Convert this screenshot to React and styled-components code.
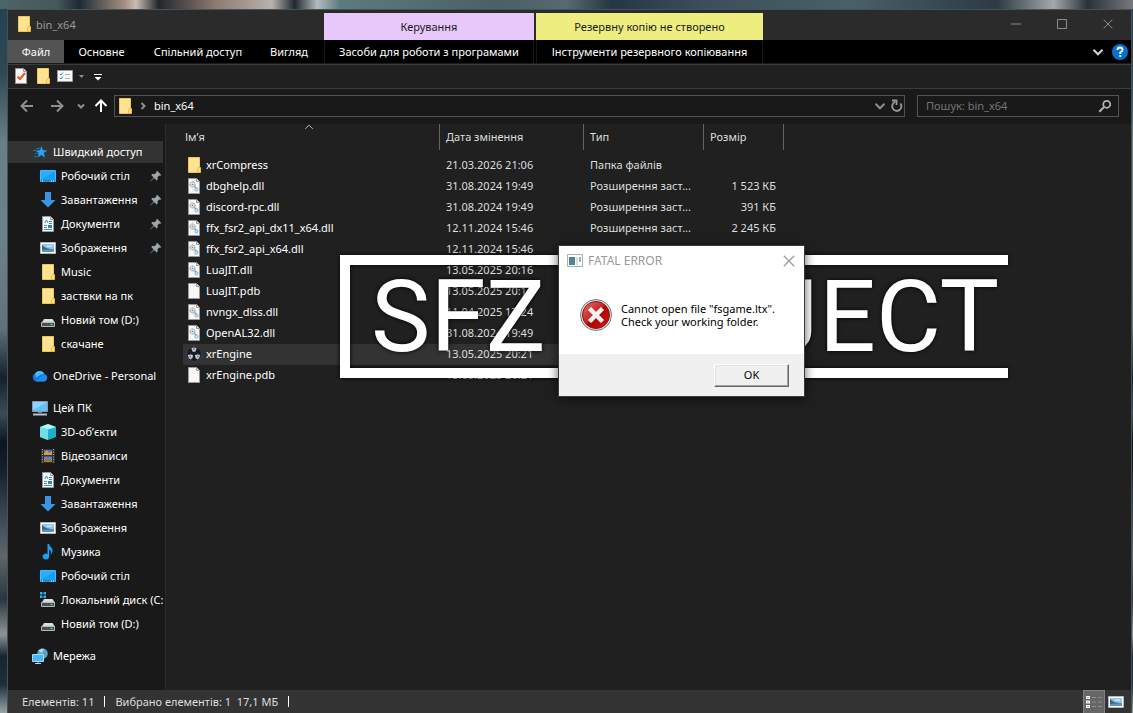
import { useState } from "react"
import styled, { createGlobalStyle } from "styled-components"

const Global = createGlobalStyle`
 * { box-sizing: border-box; }
 body {
  margin: 0;
  background-color: #1c2a33;
  font-family: 'Noto Sans', 'Open Sans', sans-serif;
  font-size: 11px;
  color: #fff;
 }
 button, input { font: inherit; color: inherit; }
`

/* ---------- layout ---------- */

const Desktop = styled.div`
 position: relative;
 min-height: 100vh;
 padding: 9px 1px 0 7px;
 display: flex;
 flex-direction: column;
 overflow: hidden;
 background:
  linear-gradient(90deg, #4d6468 0, #47585c 5%, #1d2a33 7%, #a58f83 11%, #c9bcb4 12%, #22272c 14%, #8d7a70 19%, #b9b2ac 24%, #1f2931 26%, #b4bbbb 28%, #5c7b7e 30%, #4a6066 44%, #566b70 50%, #263642 54%, #3a4f59 62%, #4a6068 75%, #2c3a44 88%, #a5a8aa 93%, #2a3138 96%, #77797d 100%) 0 0 / 100% 9px no-repeat,
  linear-gradient(180deg, #24414f 0, #2f4854 10%, #6a7f84 20%, #6d8287 33%, #5f7378 46%, #14202a 53%, #3b4c56 58%, #0d151c 62%, #16202a 66%, #394650 72%, #60666b 78%, #2a353d 84%, #8e9396 89%, #16262f 92%, #1d2f3a 96%, #98a3a6 100%);
`

const Window = styled.main`
 flex: 1;
 display: flex;
 flex-direction: column;
 border: 1px solid #44525a;
 border-bottom: none;
 background-color: #191919;
`

const TitleBar = styled.header`
 display: flex;
 align-items: flex-end;
 height: 30px;
 background-color: #2b2b2b;
`

const Caption = styled.div`
 flex: 0 0 316px;
 height: 30px;
 padding: 0 0 2px 8px;
 display: flex;
 align-items: center;
 gap: 4px;
 color: #9a9a9a;
`

const Context = styled.div`
 flex: 0 0 ${p => p.$width}px;
 height: 27px;
 margin-right: 2px;
 display: flex;
 align-items: center;
 justify-content: center;
 background-color: ${p => p.$color};
 color: #1c1c1c;
`

const WindowButtons = styled.div`
 margin-left: auto;
 display: flex;
`

const PlainButton = styled.button`
 border: none;
 padding: 0;
 background: none;
 display: flex;
 align-items: center;
 justify-content: center;
`

const WindowButton = styled(PlainButton)`
 width: 46px;
 height: 28px;
 margin-bottom: 2px;
 color: #8c8c8c;

 &:hover {
  background-color: #404040;
 }
`

const Ribbon = styled.nav`
 display: flex;
 height: 24px;
 background-color: #000;
 border-bottom: 1px solid #1b1b1b;
`

const MainTabs = styled.div`
 flex: 0 0 316px;
 display: grid;
 grid-template-columns: 56px 75px 118px 64px;
`

const Tab = styled(PlainButton)`
 height: 23px;
 white-space: nowrap;
 background-color: ${p => p.$active ? '#535353' : 'transparent'};
`

const ContextTab = styled(Tab)`
 flex: 0 0 ${p => p.$width}px;
 margin-right: 2px;
 border-left: 1px solid #161616;
 border-right: 1px solid #161616;
`

const RibbonEnd = styled.div`
 margin-left: auto;
 padding-right: 3px;
 display: flex;
 align-items: center;
 gap: 8px;
`

const QuickBar = styled.div`
 height: 25px;
 padding: 0 0 1px 5px;
 display: flex;
 align-items: center;
 gap: 6px;
 background-color: #202020;
 border-top: 1px solid #3c3c3c;
 border-bottom: 1px solid #3c3c3c;
`

const NavBar = styled.div`
 height: 35px;
 padding: 0 12px 1px 10px;
 display: flex;
 align-items: center;
`

const Arrows = styled.div`
 flex: 0 0 96px;
 display: grid;
 grid-template-columns: 18px 42px 5px 26px;
 align-items: center;
 justify-items: center;

 & > :last-child { justify-self: end; }
`

const Address = styled.div`
 flex: 1;
 height: 22px;
 padding: 0 0 0 2px;
 display: flex;
 align-items: center;
 gap: 6px;
 border: 1px solid #535353;
`

const Crumb = styled(PlainButton)`
 padding: 0 0 1px 1px;
`

const AddressEnd = styled.div`
 margin-left: auto;
 display: flex;
 align-items: center;
 gap: 2px;
`

const Search = styled.label`
 flex: 0 0 202px;
 min-width: 0;
 height: 22px;
 margin-left: 12px;
 padding: 0 6px 0 8px;
 display: flex;
 align-items: center;
 border: 1px solid #535353;

 input {
  flex: 1;
  min-width: 0;
  padding: 0 0 1px;
  border: none;
  outline: none;
  background: none;
 }
 input::placeholder {
  color: #757575;
  opacity: 1;
 }
`

const Body = styled.div`
 flex: 1;
 display: flex;
`

const Sidebar = styled.aside`
 flex: 0 0 158px;
 padding-top: 16px;
 border-right: 1px solid #2b2b2b;
 overflow: hidden;
`

const Group = styled.div`
 margin-bottom: 8px;
`

const Place = styled.a`
 height: 24px;
 padding-left: ${p => p.$child ? 32 : 24}px;
 padding-right: 1px;
 display: flex;
 align-items: center;
 gap: 5px;
 color: #fff;
 text-decoration: none;
 white-space: nowrap;
 overflow: hidden;
 background: ${p => p.$active ? '#333' : 'none'};
 background-clip: padding-box;
 border: solid transparent;
 border-width: 1px 2px 1px 0;

 svg { flex: none; }
`

const PlaceName = styled.span`
 padding-bottom: 1px;
`

const Pinned = styled.span`
 margin-left: auto;
 display: flex;
`

const Files = styled.section`
 flex: 1;
 padding-left: 17px;
 background-color: #202020;
`

const Table = styled.table`
 width: 600px;
 table-layout: fixed;
 border-collapse: separate;
 border-spacing: 0;
`

const Th = styled.th`
 width: ${p => p.$width}px;
 height: 26px;
 padding: 0 0 1px ${p => p.$first ? 2 : 6}px;
 border-right: 1px solid #636363;
 text-align: left;
 font-weight: 400;
 color: #dedede;
`

const HeadCell = styled.span`
 display: flex;
 align-items: center;
 position: relative;
`

const SortMark = styled.span`
 position: absolute;
 left: 119px;
 top: -7px;
 display: flex;
`

const Spacer = styled.tbody`
 td { height: 5px; padding: 0; }
`

const Tr = styled.tr`
 height: 21px;
 background-color: ${p => p.$active ? '#333' : 'transparent'};
`

const Td = styled.td`
 height: 21px;
 padding: 0 8px 1px 6px;
 overflow: hidden;
 white-space: nowrap;
 text-align: ${p => p.$right ? 'right' : 'left'};
 line-height: 20px;
 color: #dedede;
`

const FileName = styled.span`
 display: flex;
 align-items: center;
 gap: 4px;
 margin-left: -3px;
 color: #fff;
`

const StatusBar = styled.footer`
 height: 23px;
 padding-left: 14px;
 display: flex;
 align-items: center;
 gap: 10px;
 background-color: #333;
 color: #dedede;
`

const Divider = styled.span`
 width: 1px;
 height: 11px;
 background-color: #fff;
`

const Views = styled.div`
 margin-left: auto;
 padding-right: 4px;
 display: flex;
`

const ViewButton = styled(PlainButton)`
 width: 22px;
 height: 23px;
 border: ${p => p.$active ? '1px solid #838383' : 'none'};
 border-bottom: none;
 background-color: ${p => p.$active ? '#666' : 'transparent'};
`

/* ---------- floating windows ---------- */

const Splash = styled.div`
 position: absolute;
 left: 340px;
 top: 255px;
 width: 668px;
 height: 123px;
 border: 10px solid #fff;
 border-right: none;
 display: flex;
 align-items: center;
 padding-left: 21px;
 pointer-events: none;
 filter: drop-shadow(0 0 2px #000);
 font-family: Roboto, sans-serif;
 font-size: 100px;
 font-weight: 400;
 line-height: 103px;
 white-space: nowrap;
`

const Dialog = styled.div`
 position: absolute;
 left: 558px;
 top: 245px;
 width: 247px;
 height: 152px;
 display: flex;
 flex-direction: column;
 border: 1px solid #3a3a3a;
 background-color: #fff;
 box-shadow: 0 2px 10px #000000a0;
 color: #000;
`

const DialogTitle = styled.div`
 height: 29px;
 padding: 0 9px 0 8px;
 display: flex;
 align-items: center;
 gap: 5px;
 font-size: 12px;
 color: #999;

 button { margin-left: auto; }
`

const DialogBody = styled.div`
 flex: 1;
 padding: 0 20px 0 21px;
 display: flex;
 align-items: center;
 gap: 9px;
`

const Message = styled.p`
 margin: 0;
 line-height: 13px;
 white-space: nowrap;
`

const DialogFooter = styled.div`
 height: 42px;
 padding-right: 15px;
 display: flex;
 align-items: center;
 justify-content: flex-end;
 background-color: #f0f0f0;
`

const OkButton = styled.button`
 width: 75px;
 height: 23px;
 padding: 0 0 1px;
 border: 1px solid;
 border-color: #fff #696969 #696969 #fff;
 box-shadow: inset -1px -1px 0 #a0a0a0, inset 1px 1px 0 #e3e3e3;
 background-color: #f0f0f0;
`

/* ---------- icons ---------- */

const Svg = ({ size = 16, children, ...rest }) => (
    <svg width={size} height={size} viewBox="0 0 16 16" fill="none" aria-hidden="true" {...rest}>{children}</svg>
)

const Folder = () => (
    <Svg>
        <path d="M2.500.5h11v15h-11z" fill="#ffe394" stroke="#f0c94e" />
        <path d="M12.500 10.500h2v5h-3v-2.600z" fill="#ffdf85" stroke="#e8bd3f" />
    </Svg>
)

const Page = ({ children }) => (
    <Svg>
        <path d="M2.500.5h8l3 3v12h-11z" fill="#f7f7f7" stroke="#9a9a9a" />
        <path d="M10.500.5v3h3" fill="#ddd" stroke="#9a9a9a" />
        {children}
    </Svg>
)

const Dll = () => (
    <Page>
        <circle cx="6.500" cy="6.500" r="2.500" fill="#e3e6e8" stroke="#7b858c" strokeDasharray="1.200 .6" />
        <circle cx="6.500" cy="6.500" r=".8" fill="#7b858c" />
        <path d="M8.500 8.500l3 3" stroke="#8b979f" strokeWidth="1.500" />
        <circle cx="10.500" cy="11.500" r="1.600" fill="#cfe8f7" stroke="#79b4d6" />
    </Page>
)

const Doc = () => (
    <Page>
        <path d="M5 7l1.500-3L8 7M9 5.500h3M9 7.500h3M4 9.500h3M4 11.500h3M4 13.500h8" stroke="#3e93cf" />
        <path d="M8 9h4v3H8z" fill="#3b7fb8" />
    </Page>
)

const Engine = () => (
    <Svg>
        <circle cx="8" cy="8" r="7.500" fill="#1b1b28" stroke="#3a3a52" />
        <path d="M5.300 2.300Q8 .8 10.700 2.300L9.300 5.800H6.700zM1.800 9Q4.500 7.800 7 9L6.500 12 4.500 13.500Q2.200 12 1.800 9zM14.200 9Q11.500 7.800 9 9l.5 3 2 1.500Q13.800 12 14.200 9z" fill="#c9c9cd" />
        <path d="M8 2v2M3.500 10.500L5 11M11 11l1.500-.5" stroke="#55555f" />
    </Svg>
)

const Star = () => (
    <Svg>
        <path d="M9.600 2l1.300 4.300 4.400.1-3.600 2.700 1.400 4.400-3.700-2.500-3.900 2.600L7 9.200 3.600 6.500 8 6.300z" fill="#26a5f5" />
        <path d="M4 4.500h4M1 6.500h4M3 9.500h4M2 12.500h3" stroke="#1673bd" />
    </Svg>
)

const Monitor = () => (
    <Svg>
        <path d="M.5 2.500h15v11H.5z" fill="#1b9df5" stroke="#4db8ff" />
        <path d="M1 3h14L1 12z" fill="#2badff" />
        <path d="M1 13h14" stroke="#0b68b5" />
        <path d="M2 13h1M11 13h1M13 13h1" stroke="#fff" />
    </Svg>
)

const Down = () => (
    <Svg><path d="M5 0h6v8h4.500L8 15.500.5 8H5z" fill="#3a96e4" /></Svg>
)

const Picture = () => (
    <Svg>
        <path d="M.5 2.500h15v11H.5z" fill="#fff" stroke="#b9b9b9" />
        <path d="M2 4h12v8H2z" fill="#8fc6f0" />
        <path d="M2 5l4 3 8 1.500V12H2z" fill="#3b6c73" />
        <path d="M2 10l12-1v3H2z" fill="#5c93c4" />
        <path d="M7 6h5" stroke="#e9f4fb" />
    </Svg>
)

const Drive = ({ system }) => (
    <Svg>
        {system && <path d="M0 0h2.500v2.500H0zM3.500 0H6v2.500H3.500zM0 3.500h2.500V6H0zM3.500 3.500H6V6H3.500z" fill="#1fb6ee" />}
        <path d="M4 7h8.500l2.500 4H1.500z" fill="#dcdcdc" />
        <path d="M1.500 10.500h13v4h-13z" fill="#4b4f52" stroke="#b5b8ba" />
        <circle cx="11.500" cy="12.500" r=".9" fill="#43e05b" />
    </Svg>
)

const Cloud = () => (
    <Svg>
        <path d="M4.500 13.500A4.200 4.200 0 0 1 3 5.600 5.200 5.200 0 0 1 12.300 6 4 4 0 0 1 12 13.500z" fill="#1f6fe0" />
        <path d="M3 5.600A5.200 5.200 0 0 1 12.300 6Q8 6 4 10z" fill="#3fc0f7" />
        <path d="M3.500 13.300L10 7.800Q11 6.500 12.500 6.300A3.700 3.700 0 0 1 12.200 13.500H4.500z" fill="#1c8df0" />
    </Svg>
)

const Computer = () => (
    <Svg>
        <path d="M.5 1.500h15v10H.5z" fill="#5fc0fb" stroke="#8a9ba6" />
        <path d="M1 2h14L1 10z" fill="#8ad4ff" />
        <path d="M6 12h4v1H6z" fill="#6d7a83" />
        <path d="M1 14.500h14" stroke="#b6c2ca" strokeWidth="2" />
    </Svg>
)

const Cube = () => (
    <Svg>
        <path d="M8 0l8 3v10L8 16 0 13V3z" fill="#19b3c6" />
        <path d="M8 0l8 3-8 2.500L0 3z" fill="#b5f3f6" />
        <path d="M0 3l8 2.500V16L0 13z" fill="#70dfe7" />
    </Svg>
)

const Film = () => (
    <Svg>
        <path d="M1 1h14v14H1z" fill="#333" />
        <path d="M2.500 1v14M13.500 1v14" stroke="#a8a8a8" strokeDasharray="1 1.500" />
        <path d="M4 2h8v5H4z" fill="#4b6bdb" />
        <path d="M4 5l3-3 2 3 3-2v4H4z" fill="#dd9d35" />
        <path d="M4 8.500h8v5.500H4z" fill="#5684e0" />
        <path d="M4 12l3-2 5 2v2H4z" fill="#a87335" />
    </Svg>
)

const Note = () => (
    <Svg>
        <path d="M7.500 0h1.700c.3 3 3.800 3.500 3.300 7.200-.2 1.600-1 2.500-1.800 3.300.6-2.500.3-4.200-1.500-5V12.500a3.300 3 0 1 1-1.700-2.600z" fill="#16a0f7" />
    </Svg>
)

const Network = () => (
    <Svg>
        <circle cx="10.500" cy="5.500" r="5.300" fill="#5c9fc4" />
        <path d="M6.500 3Q9 0 12 1.500L10 5z" fill="#b3dcf0" />
        <path d="M.5 6.500h11v7H.5z" fill="#4cb5f8" stroke="#9edcff" />
        <path d="M3 15.500h6M6 14v1" stroke="#c8d2d8" />
    </Svg>
)

const Pin = () => (
    <Svg size={12}>
        <path d="M9.500 1l5.500 5.500-1.500 1-1-.3-2.500 2.600.2 3-1.400 1.200-3.400-3.400L1 15l-.5-.5 4.300-4.600L1.700 6.700 3 5.400l3 .2L8.700 3l-.3-1z" fill="#9ba6ad" />
    </Svg>
)

const Check = () => (
    <Page><path d="M4.500 8.500L7 11l5-6" stroke="#e8571d" strokeWidth="2" /></Page>
)

const Options = () => (
    <Svg>
        <path d="M.5 2.500h15v11H.5z" fill="#f7f7f7" stroke="#9c9c9c" />
        <path d="M3 6l1 1 2-2.500M3 10l1 1 2-2.500" stroke="#2b8ad8" />
        <path d="M8 6.500h5M8 10.500h5" stroke="#adb5ba" />
    </Svg>
)

const Chevron = ({ size = 10, color = '#b9b9b9', turn = 0, weight = 2 }) => (
    <Svg size={size}>
        <path d="M2 5l6 6 6-6" stroke={color} strokeWidth={weight * 16 / size} transform={`rotate(${turn} 8 8)`} />
    </Svg>
)

const Arrow = ({ color, turn }) => (
    <Svg>
        <path d="M14 8H3M8 2.500L2.500 8 8 13.500" stroke={color} strokeWidth="2" transform={`rotate(${turn} 8 8)`} />
    </Svg>
)

const Cross = ({ size = 12 }) => (
    <Svg size={size}><path d="M1 1l14 14M15 1L1 15" stroke="currentColor" strokeWidth="1.600" /></Svg>
)

const AppIcon = () => (
    <Svg>
        <path d="M.5 1.500h15v12H.5z" fill="#fff" stroke="#a9afb5" />
        <path d="M2 4h6v8H2z" fill="#4c8c86" />
        <path d="M2 4h6L2 10z" fill="#4a7fae" />
        <path d="M9 4h2v8H9z" fill="#dadcdd" />
        <path d="M12 4h2v5h-2z" fill="#8fb7a7" />
    </Svg>
)

const ErrorIcon = () => (
    <svg width="32" height="32" viewBox="0 0 32 32" aria-hidden="true">
        <defs>
            <linearGradient id="red" x1="0" y1="0" x2="1" y2="1">
                <stop offset="0" stopColor="#e0736d" />
                <stop offset=".48" stopColor="#c8211e" />
                <stop offset=".5" stopColor="#a90505" />
                <stop offset="1" stopColor="#dd1010" />
            </linearGradient>
        </defs>
        <circle cx="16" cy="16" r="15.500" fill="#dcdcdc" stroke="#7d7d7d" />
        <circle cx="16" cy="16" r="13.500" fill="url(#red)" stroke="#8c1512" />
        <path d="M9.500 9.500l13 13M22.500 9.500l-13 13" stroke="#f3f3f3" strokeWidth="4.500" />
    </svg>
)

/* ---------- data ---------- */

const quick = [
    { name: 'Робочий стіл', icon: <Monitor />, pin: true },
    { name: 'Завантаження', icon: <Down />, pin: true },
    { name: 'Документи', icon: <Doc />, pin: true },
    { name: 'Зображення', icon: <Picture />, pin: true },
    { name: 'Music', icon: <Folder /> },
    { name: 'заствки на пк', icon: <Folder /> },
    { name: 'Новий том (D:)', icon: <Drive /> },
    { name: 'скачане', icon: <Folder /> },
]

const computer = [
    { name: '3D-об’єкти', icon: <Cube /> },
    { name: 'Відеозаписи', icon: <Film /> },
    { name: 'Документи', icon: <Doc /> },
    { name: 'Завантаження', icon: <Down /> },
    { name: 'Зображення', icon: <Picture /> },
    { name: 'Музика', icon: <Note /> },
    { name: 'Робочий стіл', icon: <Monitor /> },
    { name: 'Локальний диск (C:)', icon: <Drive system /> },
    { name: 'Новий том (D:)', icon: <Drive /> },
]

const groups = [
    { name: 'Швидкий доступ', icon: <Star />, items: quick, active: true },
    { name: 'OneDrive - Personal', icon: <Cloud />, items: [] },
    { name: 'Цей ПК', icon: <Computer />, items: computer },
    { name: 'Мережа', icon: <Network />, items: [] },
]

const DLL = 'Розширення заст...'

const files = [
    ['xrCompress', '21.03.2026 21:06', 'Папка файлів', '', <Folder />],
    ['dbghelp.dll', '31.08.2024 19:49', DLL, '1 523 КБ', <Dll />],
    ['discord-rpc.dll', '31.08.2024 19:49', DLL, '391 КБ', <Dll />],
    ['ffx_fsr2_api_dx11_x64.dll', '12.11.2024 15:46', DLL, '2 245 КБ', <Dll />],
    ['ffx_fsr2_api_x64.dll', '12.11.2024 15:46', DLL, '79 КБ', <Dll />],
    ['LuaJIT.dll', '13.05.2025 20:16', '', '', <Dll />],
    ['LuaJIT.pdb', '13.05.2025 20:16', '', '', <Page />],
    ['nvngx_dlss.dll', '11.04.2025 17:24', '', '', <Dll />],
    ['OpenAL32.dll', '31.08.2024 19:49', '', '', <Dll />],
    ['xrEngine', '13.05.2025 20:21', '', '', <Engine />],
    ['xrEngine.pdb', '13.05.2025 20:21', '', '', <Page />],
]

const App = () => {
    const [selected, setSelected] = useState('xrEngine')
    const [search, setSearch] = useState('')

    return (
        <>
        <Global />
        <Desktop>
            <Window>
                <TitleBar>
                    <Caption><Folder />bin_x64</Caption>
                    <Context $width={210} $color="#e8c8fa">Керування</Context>
                    <Context $width={227} $color="#eeed80">Резервну копію не створено</Context>
                    <WindowButtons>
                        <WindowButton aria-label="Згорнути"><Svg size={10}><path d="M0 8h16" stroke="currentColor" strokeWidth="1.600" /></Svg></WindowButton>
                        <WindowButton aria-label="Розгорнути"><Svg size={10}><path d="M.8.800h14.400v14.400H.8z" stroke="currentColor" strokeWidth="1.600" /></Svg></WindowButton>
                        <WindowButton aria-label="Закрити"><Cross size={10} /></WindowButton>
                    </WindowButtons>
                </TitleBar>

                <Ribbon>
                    <MainTabs>
                        <Tab $active>Файл</Tab>
                        <Tab>Основне</Tab>
                        <Tab>Спільний доступ</Tab>
                        <Tab>Вигляд</Tab>
                    </MainTabs>
                    <ContextTab $width={210}>Засоби для роботи з програмами</ContextTab>
                    <ContextTab $width={227}>Інструменти резервного копіювання</ContextTab>
                    <RibbonEnd>
                        <PlainButton aria-label="Розгорнути стрічку"><Chevron size={12} color="#d6d6d6" /></PlainButton>
                        <PlainButton aria-label="Довідка">
                            <Svg>
                                <circle cx="8" cy="8" r="8" fill="#0a70d0" />
                                <path d="M5.500 6Q5.500 3.500 8 3.500T10.500 6Q10.500 7.200 8.200 8.500V10M8.200 11v2" stroke="#fff" strokeWidth="1.800" />
                            </Svg>
                        </PlainButton>
                    </RibbonEnd>
                </Ribbon>

                <QuickBar>
                    <PlainButton aria-label="Властивості"><Check /></PlainButton>
                    <PlainButton aria-label="Нова папка"><Folder /></PlainButton>
                    <PlainButton aria-label="Параметри"><Options /></PlainButton>
                    <Svg size={5}><path d="M0 3h16L8 13z" fill="#8f8f8f" /></Svg>
                    <PlainButton aria-label="Налаштувати панель">
                        <Svg><path d="M4 6.500h8" stroke="#fff" /><path d="M4.500 9h7L8 12.500z" fill="#fff" /></Svg>
                    </PlainButton>
                </QuickBar>

                <NavBar>
                    <Arrows>
                        <PlainButton aria-label="Назад"><Arrow color="#8f8f8f" turn={0} /></PlainButton>
                        <PlainButton aria-label="Вперед"><Arrow color="#8f8f8f" turn={180} /></PlainButton>
                        <PlainButton aria-label="Останні"><Chevron size={8} color="#8f8f8f" /></PlainButton>
                        <PlainButton aria-label="Вгору"><Arrow color="#fff" turn={90} /></PlainButton>
                    </Arrows>
                    <Address>
                        <Folder />
                        <Chevron size={8} turn={-90} color="#8f8f8f" />
                        <Crumb>bin_x64</Crumb>
                        <AddressEnd>
                            <PlainButton aria-label="Попередні розташування"><Chevron size={12} color="#8f8f8f" /></PlainButton>
                            <PlainButton aria-label="Оновити">
                                <Svg>
                                    <path d="M12.500 5.500A4.600 4.600 0 1 1 7 4M4 2.500h4.500V7" stroke="#9a9a9a" strokeWidth="1.800" />
                                </Svg>
                            </PlainButton>
                        </AddressEnd>
                    </Address>
                    <Search>
                        <input type="text" aria-label="Пошук" placeholder="Пошук: bin_x64" value={search} onChange={(e) => setSearch(e.target.value)} />
                        <Svg size={14}>
                            <circle cx="10" cy="6" r="4" stroke="#b5b5b5" strokeWidth="2" />
                            <path d="M7 9l-5.500 5.500" stroke="#b5b5b5" strokeWidth="2.400" />
                        </Svg>
                    </Search>
                </NavBar>

                <Body>
                    <Sidebar>
                        {groups.map(group => (
                            <Group key={group.name}>
                                <Place href="#" $active={group.active}>
                                    {group.icon}
                                    <PlaceName>{group.name}</PlaceName>
                                </Place>
                                {group.items.map(item => (
                                    <Place href="#" $child key={item.name}>
                                        {item.icon}
                                        <PlaceName>{item.name}</PlaceName>
                                        {item.pin && <Pinned><Pin /></Pinned>}
                                    </Place>
                                ))}
                            </Group>
                        ))}
                    </Sidebar>
                    <Files>
                        <Table>
                            <thead>
                                <tr>
                                    <Th $width={257} $first>
                                        <HeadCell>
                                            Ім’я
                                            <SortMark><Chevron size={10} turn={180} weight={1} /></SortMark>
                                        </HeadCell>
                                    </Th>
                                    <Th $width={144}>Дата змінення</Th>
                                    <Th $width={120}>Тип</Th>
                                    <Th $width={80}>Розмір</Th>
                                </tr>
                            </thead>
                            <Spacer><tr><td colSpan={4} /></tr></Spacer>
                            <tbody>
                                {files.map(([name, date, type, size, icon]) => (
                                    <Tr key={name} $active={name === selected} onClick={() => setSelected(name)}>
                                        <Td><FileName>{icon}{name}</FileName></Td>
                                        <Td>{date}</Td>
                                        <Td>{type}</Td>
                                        <Td $right>{size}</Td>
                                    </Tr>
                                ))}
                            </tbody>
                        </Table>
                    </Files>
                </Body>

                <StatusBar>
                    <span>Елементів: 11</span>
                    <Divider />
                    <span>Вибрано елементів: 1&nbsp; 17,1 МБ</span>
                    <Divider />
                    <Views>
                        <ViewButton $active aria-label="Таблиця">
                            <Svg>
                                <path d="M0 2h4v3H0zM0 6.500h4v3H0zM0 11h4v3H0z" fill="#fff" />
                                <path d="M1.500 3.500h1M1.500 8h1M1.500 12.500h1" stroke="#555" />
                                <path d="M6 3.500h4M12 3.500h4M6 8h4M12 8h4M6 12.500h4M12 12.500h4" stroke="#8d8d8d" />
                            </Svg>
                        </ViewButton>
                        <ViewButton aria-label="Ескізи"><Picture /></ViewButton>
                    </Views>
                </StatusBar>
            </Window>

            <Splash>SFZ PROJECT</Splash>

            <Dialog role="alertdialog" aria-label="FATAL ERROR">
                <DialogTitle>
                    <AppIcon />
                    FATAL ERROR
                    <PlainButton aria-label="Закрити"><Cross size={12} /></PlainButton>
                </DialogTitle>
                <DialogBody>
                    <ErrorIcon />
                    <Message>
                        Cannot open file "fsgame.ltx".
                        <br />
                        Check your working folder.
                    </Message>
                </DialogBody>
                <DialogFooter>
                    <OkButton>OK</OkButton>
                </DialogFooter>
            </Dialog>
        </Desktop>
        </>
    )
}

export default App
